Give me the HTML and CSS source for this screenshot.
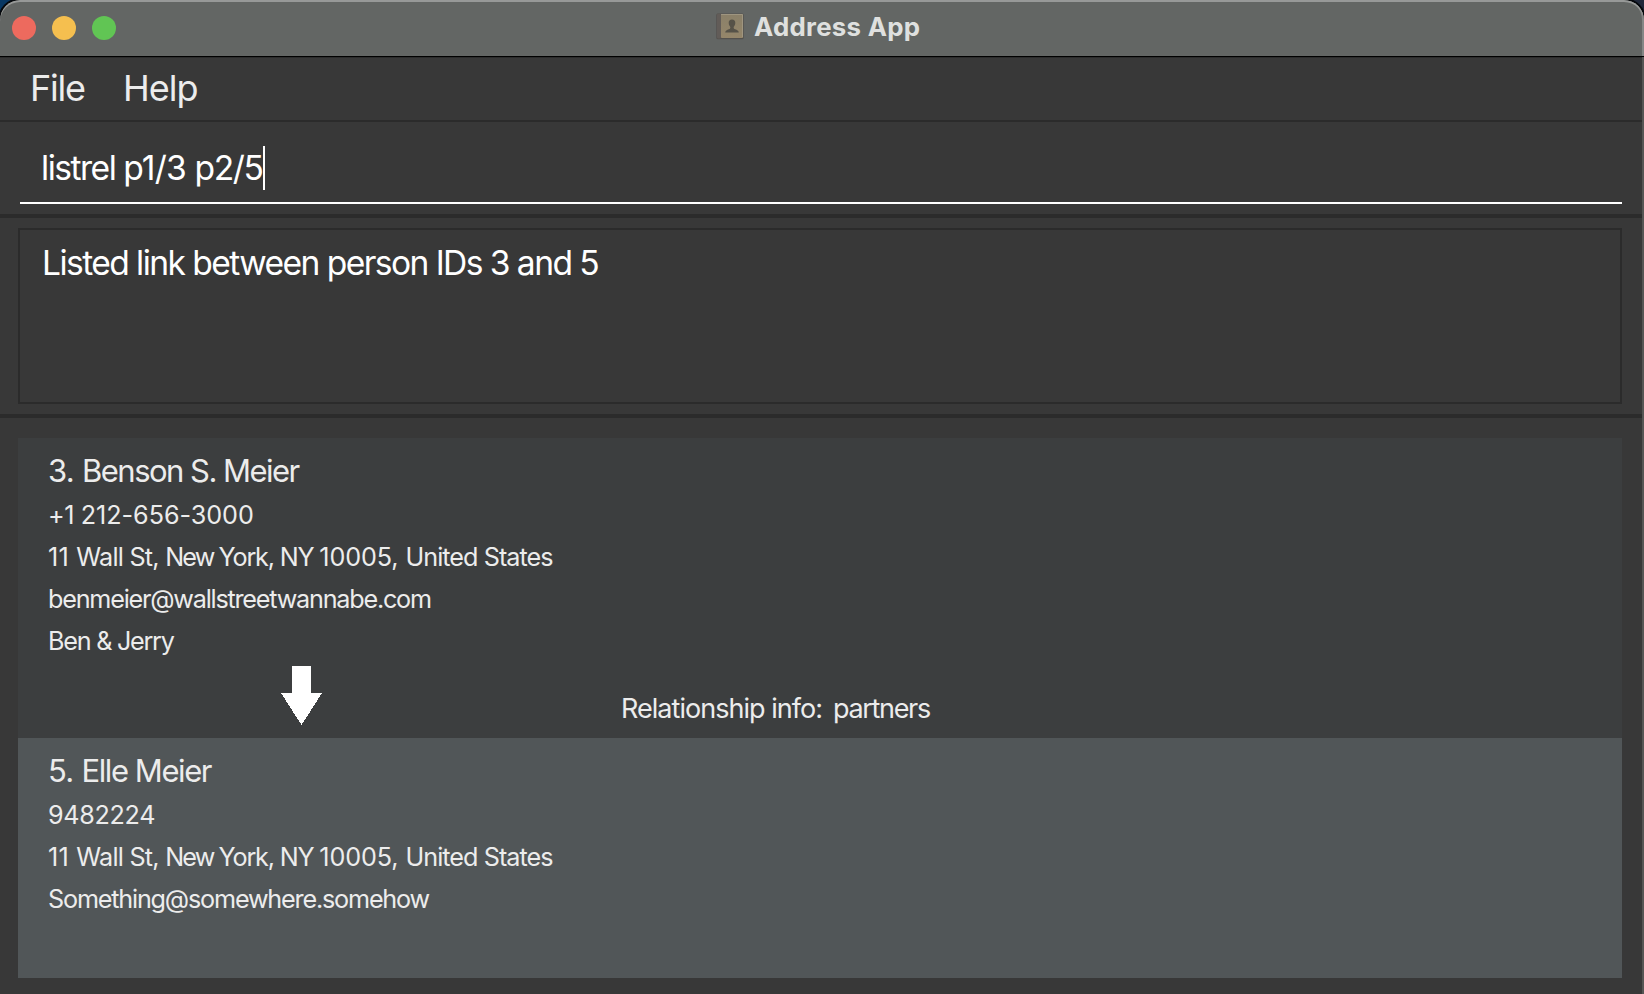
FILE: index.html
```
<!DOCTYPE html>
<html lang="en">
<head>
<meta charset="utf-8">
<title>Address App</title>
<link rel="stylesheet" href="styles.css">
</head>
<body>
<div class="window">
  <header class="titlebar">
    <div class="lights">
      <span class="light close"></span>
      <span class="light minimize"></span>
      <span class="light zoom"></span>
    </div>
    <div class="title">
      <svg class="book" width="28" height="27" viewBox="0 0 28 27">
        <defs>
          <linearGradient id="cover" x1="0" y1="0" x2="0" y2="1">
            <stop offset="0" stop-color="#8a8069"/>
            <stop offset="1" stop-color="#95866a"/>
          </linearGradient>
        </defs>
        <rect x="0.3" y="0.5" width="27.4" height="25.7" rx="1.5" fill="#54514d"/>
        <rect x="1" y="0.8" width="4" height="24.6" rx="1" fill="#625c58"/>
        <rect x="5" y="1" width="22" height="24" rx="0.8" fill="url(#cover)"/>
        <path d="M5 1.5H26.500V24" fill="none" stroke="#a39b86" stroke-width="0.8"/>
        <path d="M16 6.600c-2.200 0-3.400 1.500-3.300 3.500.1 1.700.8 3 1.600 3.800.2 1.200-.3 1.800-1.500 2.300-1.900.7-3.400 1.200-3.600 3.400h13.600c-.2-2.200-1.700-2.700-3.600-3.400-1.200-.5-1.700-1.100-1.500-2.300.8-.8 1.500-2.100 1.600-3.800.1-2-1.100-3.500-3.300-3.500z" fill="#565248"/>
      </svg>
      <span class="title-text">Address App</span>
    </div>
  </header>

  <nav class="menubar">
    <span class="menu file">File</span>
    <span class="menu help">Help</span>
  </nav>

  <section class="command">
    <div class="field"><span class="command-text"><span class="cmd-word">listrel </span><span class="cmd-first">p1/3 </span><span class="cmd-second">p2/5</span></span><span class="caret"></span></div>
  </section>

  <section class="result">
    <div class="result-box">Listed link between person IDs 3 and 5</div>
  </section>

  <main class="list">
    <article class="card">
      <h2 class="name name-benson"><span class="index">3. </span>Benson S. Meier</h2>
      <p class="row phone-benson"><span class="country-code">+1 </span>212-656-3000</p>
      <p class="row address"><span class="number">11 </span><span class="street">Wall St, </span><span class="new">New </span><span class="city">York, NY </span><span class="zip">10005, </span><span class="country">United States</span></p>
      <p class="row email-benson">benmeier@wallstreetwannabe.com</p>
      <p class="row tagline">Ben &amp; Jerry</p>
      <div class="link">
        <svg class="arrow" width="41" height="59" viewBox="0 0 41 59" shape-rendering="crispEdges">
          <path d="M11 0H30V27H41L20.500 59L0 27H11Z" fill="#fff"/>
        </svg>
        <div class="relationship">
          <span class="rel-label">Relationship info:</span>
          <span class="rel-value">partners</span>
        </div>
      </div>
    </article>
    <article class="card selected">
      <h2 class="name name-elle"><span class="index">5. </span>Elle Meier</h2>
      <p class="row phone-elle">9482224</p>
      <p class="row address"><span class="number">11 </span><span class="street">Wall St, </span><span class="new">New </span><span class="city">York, NY </span><span class="zip">10005, </span><span class="country">United States</span></p>
      <p class="row email-elle">Something@somewhere.somehow</p>
    </article>
  </main>
</div>
</body>
</html>
```

FILE: styles.css
```
* { box-sizing: border-box; }

body {
  margin: 0;
  height: 994px;
  overflow: hidden;
  background: linear-gradient(90deg, #073763 0 50%, #20283a 50% 100%);
  font-family: Inter, "Liberation Sans", sans-serif;
  color: #ececec;
}

.window {
  position: relative;
  display: flex;
  flex-direction: column;
  width: 1644px;
  height: 994px;
  overflow: hidden;
  border-radius: 20px 20px 0 0;
  background: #383838;
  box-shadow: 0 0 0 2px #05080c;
}

/* Light rim along the window's right edge */
.window::after {
  content: "";
  position: absolute;
  top: 57px;
  right: 0;
  bottom: 0;
  width: 2px;
  background: #555554;
}

.titlebar {
  position: relative;
  flex: none;
  height: 57px;
  padding: 0 12px;
  display: flex;
  align-items: center;
  border-bottom: 1px solid #000;
  border-radius: 20px 20px 0 0;
  background: #636664;
  box-shadow: inset 0 2px 0 #979998, inset -2px 0 0 #848685;
}

.lights { display: flex; gap: 16px; }
.light { width: 24px; height: 24px; border-radius: 50%; }
.close { background: #ed6a5e; }
.minimize { background: #f5bf4f; }
.zoom { background: #61c554; }

.title {
  display: flex;
  align-items: center;
  gap: 11px;
  margin-left: 600px;
}
.book { flex: none; margin-top: -4px; }
.title-text {
  margin: -3px 0 0 -1px;
  font-size: 25.8px;
  line-height: 32px;
  font-weight: 700;
  letter-spacing: 0.28px;
  color: #dfe0df;
  white-space: nowrap;
}

.menubar {
  flex: none;
  height: 65px;
  padding-left: 30px;
  display: flex;
  gap: 38px;
  border-top: 1px solid #2c2c2c;
  border-bottom: 2px solid #2b2b2b;
}
.menu { font-size: 36px; line-height: 60px; }
.file { width: 55px; letter-spacing: -1.23px; }
.help { letter-spacing: -0.95px; }

.command {
  flex: none;
  height: 96px;
  padding: 17px 22px 0 20px;
  border-bottom: 4px solid #2b2b2b;
}
.field {
  height: 65px;
  padding-left: 21px;
  display: flex;
  border-bottom: 2px solid #fff;
  color: #fff;
}
.command-text {
  width: 222px;
  font-size: 33.6px;
  line-height: 58px;
  white-space: pre;
}
.cmd-word { letter-spacing: -1.5px; }
.cmd-first { letter-spacing: -0.8px; }
.cmd-second { letter-spacing: -1.4px; }
.caret { width: 2px; height: 44px; margin-top: 7px; background: #fff; }

.result {
  flex: none;
  height: 200px;
  padding: 10px 22px 10px 18px;
  border-bottom: 4px solid #2b2b2b;
}
.result-box {
  height: 176px;
  padding: 13px 22px;
  border: 2px solid #2b2b2b;
  font-size: 33.6px;
  line-height: 40px;
  letter-spacing: -1.565px;
  color: #fff;
}

.list { padding: 20px 22px 0 18px; }
.card {
  height: 300px;
  padding: 10px 0 0 30px;
  background: #3c3e3f;
}
.selected { height: 240px; background: #515658; }

.name {
  margin: 0;
  font-size: 31px;
  line-height: 46px;
  font-weight: 400;
}
.name-benson { letter-spacing: -1.52px; }
.name-elle { letter-spacing: -1.43px; }
.index { letter-spacing: -0.7px; }

.row { margin: 0; font-size: 25.2px; line-height: 42px; }
.phone-benson { letter-spacing: -0.06px; }
.country-code { letter-spacing: -0.4px; }
.number { letter-spacing: 0.2px; }
.street { letter-spacing: -0.74px; }
.new { letter-spacing: -1.9px; }
.city { letter-spacing: -1.2px; }
.zip { letter-spacing: -0.1px; }
.country { letter-spacing: -0.95px; }
.email-benson { letter-spacing: -1.22px; }
.tagline { letter-spacing: -1.25px; }
.phone-elle { letter-spacing: -0.32px; }
.email-elle { letter-spacing: -1.19px; }

.link { display: flex; padding: 4px 0 0 233px; }
.arrow { flex: none; }
.relationship {
  display: flex;
  margin: 23px 0 0 299px;
  font-size: 27px;
  line-height: 40px;
  white-space: nowrap;
}
.rel-label { width: 212px; letter-spacing: -0.965px; }
.rel-value { letter-spacing: -1.33px; }
```
